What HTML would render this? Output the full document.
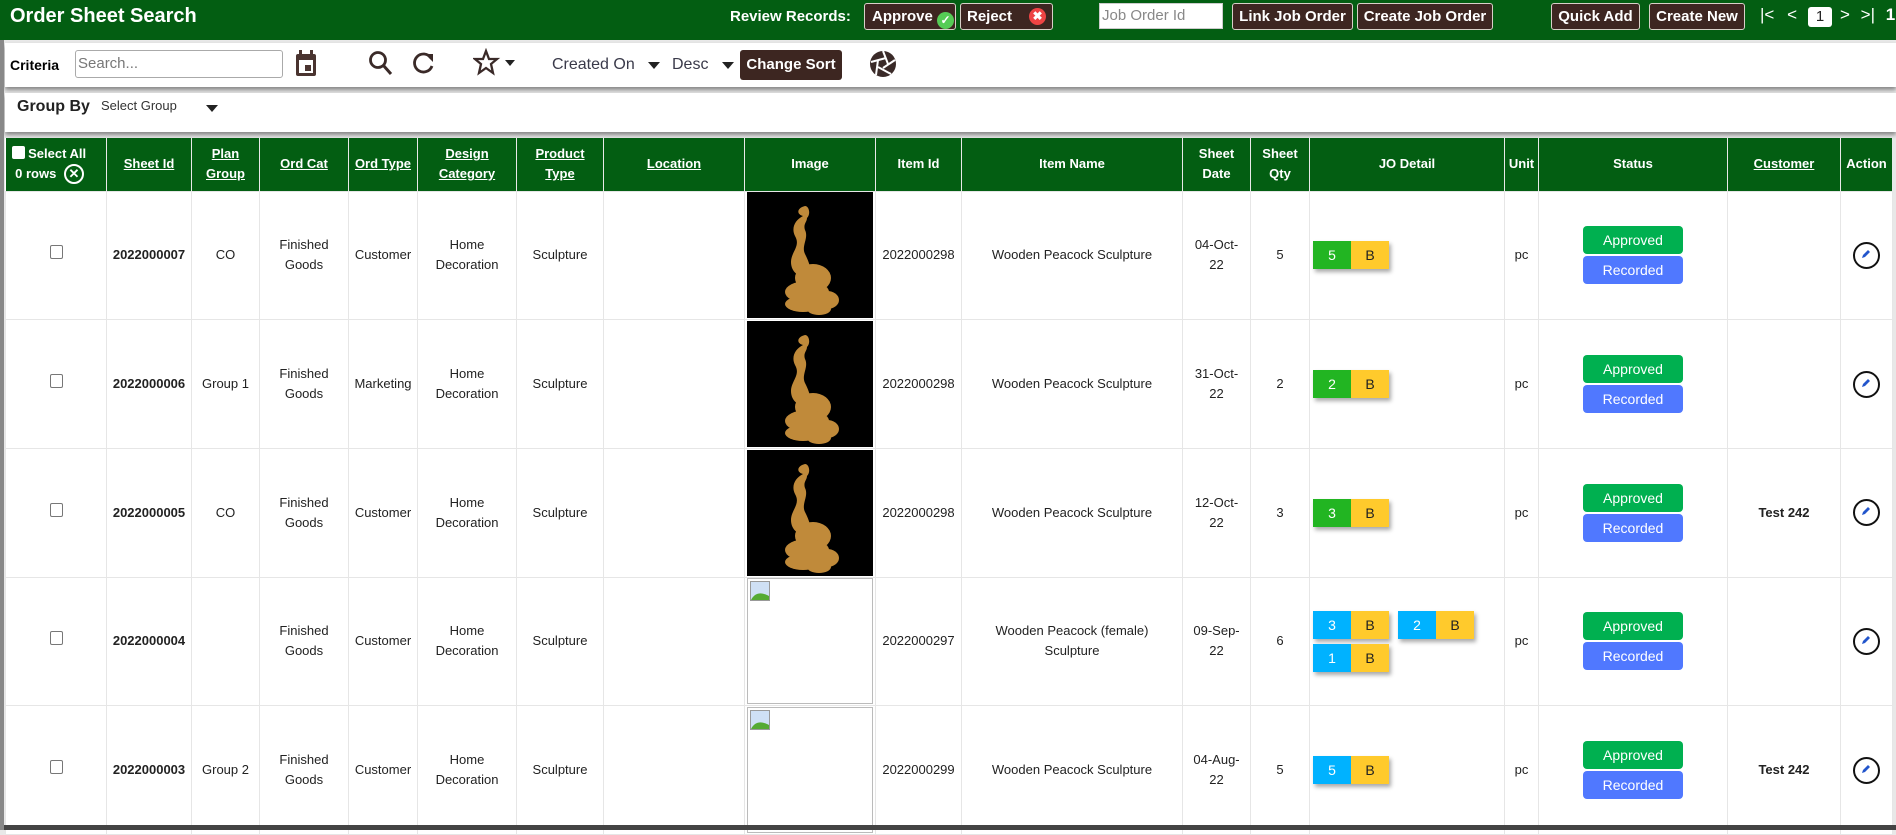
<!DOCTYPE html>
<html><head><meta charset="utf-8">
<style>
*{box-sizing:border-box;margin:0;padding:0}
body{width:1896px;height:830px;overflow:hidden;background:#e8e8e8;font-family:"Liberation Sans",Arial,sans-serif;position:relative}
.top{position:absolute;left:0;top:0;width:1896px;height:40px;background:#035e12;color:#fff}
.abs{position:absolute}
.btn{position:absolute;top:3px;height:27px;background:#3d2621;border:1px solid #d8d0c8;border-radius:3px;color:#fff;font-weight:bold;font-size:15px;line-height:25px;text-align:center}
.box{position:absolute;left:5px;width:1891px;background:#fff;box-shadow:0 3px 4px #888}
table{position:absolute;left:5px;top:138px;border-collapse:collapse;table-layout:fixed;background:#fff}
th{background:#035e12;color:#fff;font-size:13px;font-weight:bold;height:53px;border-right:1px solid #e8e8e8;line-height:20px;text-align:center}
th u{text-decoration:underline}
td{height:128.7px;border:1px solid #e6e6e6;font-size:13px;color:#222;text-align:center;line-height:20px}
.chip{display:inline-block;width:76px;height:28px;box-shadow:2px 3px 4px #aaa;vertical-align:top;font-size:14px;line-height:28px}
.chip span{display:inline-block;width:38px;height:28px;float:left;text-align:center}
.st{width:100px;height:28px;border-radius:4px;color:#fff;font-size:14px;line-height:28px;margin:2px auto}
.img{width:126px;height:126px;margin:auto;background:#000}
.broken{width:126px;height:126px;margin:auto;border:1px solid #bbb;background:#fff;position:relative}
.ed{width:27px;height:27px;border:2.5px solid #111;border-radius:50%;margin:auto;position:relative}
</style></head><body>
<div class="top">
<div class="abs" style="left:10px;top:5px;font-size:20px;font-weight:bold">Order Sheet Search</div>
<div class="abs" style="left:730px;top:8px;font-size:15px;font-weight:bold">Review Records:</div>
<div class="btn" style="left:864px;width:92px;text-align:left;padding-left:7px">Approve <span style="display:inline-block;width:17px;height:17px;border-radius:50%;background:#5c5;vertical-align:-3px;font-size:12px;line-height:17px;text-align:center">✓</span></div>
<div class="btn" style="left:960px;width:93px;text-align:left;padding-left:6px">Reject <span style="position:absolute;right:6px;top:4px;width:17px;height:17px;border-radius:50%;background:#e44;font-size:12px;line-height:17px;text-align:center">✖</span></div>
<div class="abs" style="left:1099px;top:3px;width:124px;height:26px;background:#fff;border:1px solid #ccc;color:#888;font-size:15px;line-height:24px;padding-left:2px">Job Order Id</div>
<div class="btn" style="left:1232px;width:121px">Link Job Order</div>
<div class="btn" style="left:1357px;width:136px">Create Job Order</div>
<div class="btn" style="left:1551px;width:89px">Quick Add</div>
<div class="btn" style="left:1649px;width:96px">Create New</div>
<div class="abs" style="left:1760px;top:5px;font-size:17px;word-spacing:8px">|&lt; &lt;</div>
<div class="abs" style="left:1808px;top:7px;width:24px;height:20px;background:#fff;border-radius:3px;color:#222;font-size:15px;text-align:center;line-height:20px">1</div>
<div class="abs" style="left:1840px;top:5px;font-size:17px;word-spacing:6px">&gt; &gt;| <b>1</b></div>
</div>

<div class="box" style="top:43px;height:44px">
<div class="abs" style="left:5px;top:14px;font-size:14px;font-weight:bold">Criteria</div>
<div class="abs" style="left:70px;top:7px;width:208px;height:28px;border:1px solid #aaa;border-radius:3px;color:#777;font-size:15px;line-height:26px;padding-left:2px">Search...</div>
<svg class="abs" style="left:288px;top:6px" width="26" height="30" viewBox="0 0 26 30"><rect x="3" y="5" width="20" height="22" rx="2" fill="#4a3430"/><rect x="6" y="11" width="14" height="13" fill="#fff"/><rect x="12" y="16" width="6" height="6" fill="#4a3430"/><rect x="6" y="1" width="3" height="6" fill="#4a3430"/><rect x="17" y="1" width="3" height="6" fill="#4a3430"/></svg>
<svg class="abs" style="left:362px;top:6px" width="28" height="28"><circle cx="11" cy="11" r="7.5" fill="none" stroke="#3a2a28" stroke-width="2.8"/><line x1="16" y1="16" x2="24" y2="25" stroke="#3a2a28" stroke-width="3"/></svg>
<svg class="abs" style="left:406px;top:7px" width="26" height="26"><path d="M20 8 A9 9 0 1 0 21 16" fill="none" stroke="#3a2a28" stroke-width="2.8"/><path d="M14 4 L22 4 L22 12 Z" fill="#3a2a28"/></svg>
<svg class="abs" style="left:468px;top:5px" width="50" height="30"><path d="M13 3 L16 11 L24 11 L18 16 L20 25 L13 20 L6 25 L8 16 L2 11 L10 11 Z" fill="none" stroke="#3a2a28" stroke-width="2.3"/><path d="M32 12 L42 12 L37 18 Z" fill="#222"/></svg>
<div class="abs" style="left:547px;top:13px;font-size:16px;color:#3a3a4a">Created On</div>
<svg class="abs" style="left:643px;top:19px" width="12" height="8"><path d="M0 0 L12 0 L6 7Z" fill="#222"/></svg>
<div class="abs" style="left:667px;top:13px;font-size:16px;color:#3a3a4a">Desc</div>
<svg class="abs" style="left:717px;top:19px" width="12" height="8"><path d="M0 0 L12 0 L6 7Z" fill="#222"/></svg>
<div class="abs" style="left:735px;top:7px;width:102px;height:30px;background:#3d2621;border-radius:3px;color:#fff;font-weight:bold;font-size:15px;line-height:30px;text-align:center">Change Sort</div>
<svg class="abs" style="left:864px;top:6px" width="28" height="30" viewBox="0 0 28 30"><circle cx="14" cy="15" r="13" fill="#3a2a28"/><g stroke="#fff" stroke-width="2"><line x1="14" y1="2" x2="19" y2="15"/><line x1="26" y1="11" x2="14" y2="19"/><line x1="22" y1="25" x2="9" y2="18"/><line x1="7" y1="26" x2="9" y2="11"/><line x1="2" y1="13" x2="17" y2="9"/></g></svg>
</div>

<div class="box" style="top:93px;height:39px">
<div class="abs" style="left:12px;top:5px;font-size:16px;font-weight:bold;color:#222">Group By</div>
<div class="abs" style="left:96px;top:5px;font-size:13px;color:#333">Select Group</div>
<svg class="abs" style="left:201px;top:12px" width="12" height="8"><path d="M0 0 L12 0 L6 7Z" fill="#222"/></svg>
</div>

<table>
<colgroup><col style="width:101px"><col style="width:85px"><col style="width:68px"><col style="width:89px"><col style="width:69px"><col style="width:99px"><col style="width:87px"><col style="width:141px"><col style="width:131px"><col style="width:86px"><col style="width:221px"><col style="width:68px"><col style="width:59px"><col style="width:195px"><col style="width:34px"><col style="width:189px"><col style="width:113px"><col style="width:52px"></colgroup>
<tr>
<th style="text-align:left;padding-left:6px"><span style="display:inline-block;width:13px;height:13px;background:#fff;border-radius:2px;vertical-align:-1px"></span> Select All<br>&nbsp;0 rows <span style="display:inline-block;width:20px;height:20px;border:2px solid #fff;border-radius:50%;text-align:center;line-height:15px;font-size:13px;margin-left:4px">✕</span></th>
<th><u>Sheet Id</u></th><th><u>Plan<br>Group</u></th><th><u>Ord Cat</u></th><th><u>Ord Type</u></th><th><u>Design<br>Category</u></th><th><u>Product<br>Type</u></th><th><u>Location</u></th><th>Image</th><th>Item Id</th><th>Item Name</th><th>Sheet<br>Date</th><th>Sheet<br>Qty</th><th>JO Detail</th><th>Unit</th><th>Status</th><th><u>Customer</u></th><th>Action</th>
</tr>
<tr><td><span style="display:inline-block;width:13px;height:14px;border:1px solid #777;border-radius:2px"></span></td><td><b>2022000007</b></td><td>CO</td><td>Finished<br>Goods</td><td>Customer</td><td>Home<br>Decoration</td><td>Sculpture</td><td></td>
<td><div class="img"><svg width="126" height="126"><g fill="#c08a3a"><path d="M58 14 C50 16 49 22 56 24 C48 28 44 36 48 44 C54 54 44 60 44 70 C44 80 52 86 62 86 C66 80 62 70 58 62 C54 54 62 46 58 38 C56 32 60 30 60 26 C64 22 62 14 58 14Z"/><ellipse cx="66" cy="86" rx="18" ry="14"/><ellipse cx="60" cy="100" rx="22" ry="11"/><ellipse cx="56" cy="112" rx="18" ry="8"/><ellipse cx="80" cy="108" rx="12" ry="9"/><ellipse cx="72" cy="117" rx="12" ry="6"/></g></svg></div></td>
<td>2022000298</td><td>Wooden Peacock Sculpture</td><td>04-Oct-<br>22</td><td>5</td><td style="text-align:left;padding-left:3px"><div class="chip"><span style="background:#22b522;color:#fff">5</span><span style="background:#ffca2c">B</span></div></td><td>pc</td><td><div class="st" style="background:#00b050">Approved</div><div class="st" style="background:#5078ff">Recorded</div></td><td></td><td><div class="ed"><svg class="abs" style="left:5px;top:4px" width="12" height="12"><path d="M2 10 L3 7 L8 2 L10 4 L5 9Z" fill="#2255cc"/></svg></div></td></tr>

<tr><td><span style="display:inline-block;width:13px;height:14px;border:1px solid #777;border-radius:2px"></span></td><td><b>2022000006</b></td><td>Group 1</td><td>Finished<br>Goods</td><td>Marketing</td><td>Home<br>Decoration</td><td>Sculpture</td><td></td>
<td><div class="img"><svg width="126" height="126"><g fill="#c08a3a"><path d="M58 14 C50 16 49 22 56 24 C48 28 44 36 48 44 C54 54 44 60 44 70 C44 80 52 86 62 86 C66 80 62 70 58 62 C54 54 62 46 58 38 C56 32 60 30 60 26 C64 22 62 14 58 14Z"/><ellipse cx="66" cy="86" rx="18" ry="14"/><ellipse cx="60" cy="100" rx="22" ry="11"/><ellipse cx="56" cy="112" rx="18" ry="8"/><ellipse cx="80" cy="108" rx="12" ry="9"/><ellipse cx="72" cy="117" rx="12" ry="6"/></g></svg></div></td>
<td>2022000298</td><td>Wooden Peacock Sculpture</td><td>31-Oct-<br>22</td><td>2</td><td style="text-align:left;padding-left:3px"><div class="chip"><span style="background:#22b522;color:#fff">2</span><span style="background:#ffca2c">B</span></div></td><td>pc</td><td><div class="st" style="background:#00b050">Approved</div><div class="st" style="background:#5078ff">Recorded</div></td><td></td><td><div class="ed"><svg class="abs" style="left:5px;top:4px" width="12" height="12"><path d="M2 10 L3 7 L8 2 L10 4 L5 9Z" fill="#2255cc"/></svg></div></td></tr>

<tr><td><span style="display:inline-block;width:13px;height:14px;border:1px solid #777;border-radius:2px"></span></td><td><b>2022000005</b></td><td>CO</td><td>Finished<br>Goods</td><td>Customer</td><td>Home<br>Decoration</td><td>Sculpture</td><td></td>
<td><div class="img"><svg width="126" height="126"><g fill="#c08a3a"><path d="M58 14 C50 16 49 22 56 24 C48 28 44 36 48 44 C54 54 44 60 44 70 C44 80 52 86 62 86 C66 80 62 70 58 62 C54 54 62 46 58 38 C56 32 60 30 60 26 C64 22 62 14 58 14Z"/><ellipse cx="66" cy="86" rx="18" ry="14"/><ellipse cx="60" cy="100" rx="22" ry="11"/><ellipse cx="56" cy="112" rx="18" ry="8"/><ellipse cx="80" cy="108" rx="12" ry="9"/><ellipse cx="72" cy="117" rx="12" ry="6"/></g></svg></div></td>
<td>2022000298</td><td>Wooden Peacock Sculpture</td><td>12-Oct-<br>22</td><td>3</td><td style="text-align:left;padding-left:3px"><div class="chip"><span style="background:#22b522;color:#fff">3</span><span style="background:#ffca2c">B</span></div></td><td>pc</td><td><div class="st" style="background:#00b050">Approved</div><div class="st" style="background:#5078ff">Recorded</div></td><td><b>Test 242</b></td><td><div class="ed"><svg class="abs" style="left:5px;top:4px" width="12" height="12"><path d="M2 10 L3 7 L8 2 L10 4 L5 9Z" fill="#2255cc"/></svg></div></td></tr>

<tr><td><span style="display:inline-block;width:13px;height:14px;border:1px solid #777;border-radius:2px"></span></td><td><b>2022000004</b></td><td></td><td>Finished<br>Goods</td><td>Customer</td><td>Home<br>Decoration</td><td>Sculpture</td><td></td>
<td><div class="broken"><svg class="abs" style="left:2px;top:2px" width="20" height="20"><rect x="0.5" y="0.5" width="19" height="19" fill="#cfe0f5" stroke="#999"/><path d="M1 19 C5 11 12 11 19 15 L19 19Z" fill="#5a3"/></svg></div></td>
<td>2022000297</td><td>Wooden Peacock (female)<br>Sculpture</td><td>09-Sep-<br>22</td><td>6</td><td style="text-align:left;padding-left:3px"><div class="chip" style="margin-right:9px"><span style="background:#00b2ff;color:#fff">3</span><span style="background:#ffca2c">B</span></div><div class="chip"><span style="background:#00b2ff;color:#fff">2</span><span style="background:#ffca2c">B</span></div><br><div class="chip" style="margin-top:5px"><span style="background:#00b2ff;color:#fff">1</span><span style="background:#ffca2c">B</span></div></td><td>pc</td><td><div class="st" style="background:#00b050">Approved</div><div class="st" style="background:#5078ff">Recorded</div></td><td></td><td><div class="ed"><svg class="abs" style="left:5px;top:4px" width="12" height="12"><path d="M2 10 L3 7 L8 2 L10 4 L5 9Z" fill="#2255cc"/></svg></div></td></tr>

<tr><td><span style="display:inline-block;width:13px;height:14px;border:1px solid #777;border-radius:2px"></span></td><td><b>2022000003</b></td><td>Group 2</td><td>Finished<br>Goods</td><td>Customer</td><td>Home<br>Decoration</td><td>Sculpture</td><td></td>
<td><div class="broken"><svg class="abs" style="left:2px;top:2px" width="20" height="20"><rect x="0.5" y="0.5" width="19" height="19" fill="#cfe0f5" stroke="#999"/><path d="M1 19 C5 11 12 11 19 15 L19 19Z" fill="#5a3"/></svg></div></td>
<td>2022000299</td><td>Wooden Peacock Sculpture</td><td>04-Aug-<br>22</td><td>5</td><td style="text-align:left;padding-left:3px"><div class="chip"><span style="background:#00b2ff;color:#fff">5</span><span style="background:#ffca2c">B</span></div></td><td>pc</td><td><div class="st" style="background:#00b050">Approved</div><div class="st" style="background:#5078ff">Recorded</div></td><td><b>Test 242</b></td><td><div class="ed"><svg class="abs" style="left:5px;top:4px" width="12" height="12"><path d="M2 10 L3 7 L8 2 L10 4 L5 9Z" fill="#2255cc"/></svg></div></td></tr>
</table>
<div class="abs" style="left:0;top:825px;width:1896px;height:5px;background:#444"></div>
<div class="abs" style="left:0;top:40px;width:4px;height:790px;background:#888"></div>
</body></html>
